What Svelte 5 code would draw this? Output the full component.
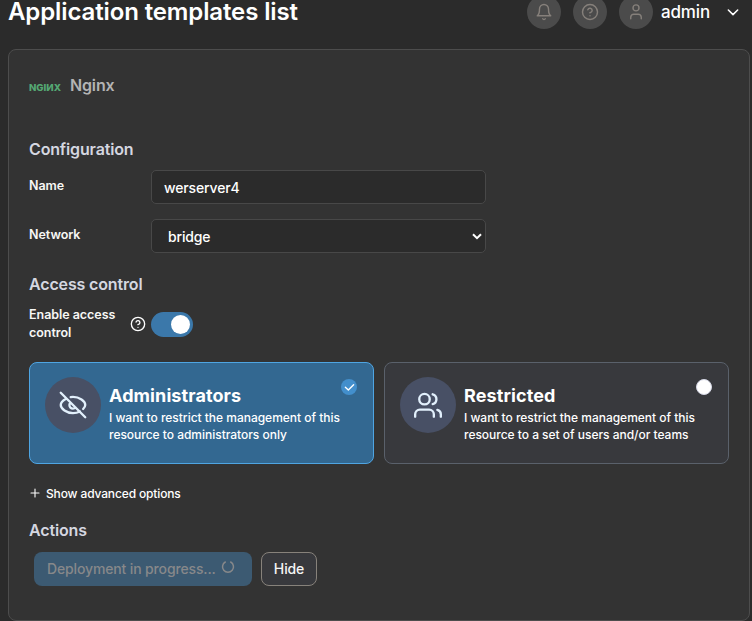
<script>
  const cards = [
    {
      title: 'Administrators',
      lines: ['I want to restrict the management of this', 'resource to administrators only'],
      icon: 'eye-off',
      selected: true
    },
    {
      title: 'Restricted',
      lines: ['I want to restrict the management of this', 'resource to a set of users and/or teams'],
      icon: 'users',
      selected: false
    }
  ];
</script>

<div class="page">
  <header>
    <h1>Application templates list</h1>
    <div class="tools">
      <button class="round" aria-label="Notifications">
        <svg width="18" height="18" viewBox="0 0 24 24"><path d="M18 8A6 6 0 0 0 6 8c0 7-3 9-3 9h18s-3-2-3-9" /><path d="M13.73 21a2 2 0 0 1-3.46 0" /></svg>
      </button>
      <button class="round" aria-label="Help">
        <svg width="18" height="18" viewBox="0 0 24 24"><circle cx="12" cy="12" r="10" /><path d="M9.09 9a3 3 0 0 1 5.83 1c0 2-3 3-3 3M12 17h.01" /></svg>
      </button>
      <button class="round" aria-label="Account">
        <svg width="18" height="18" viewBox="0 0 24 24"><path d="M19 21v-2a4 4 0 0 0-4-4H9a4 4 0 0 0-4 4v2" /><circle cx="12" cy="6.500" r="4" /></svg>
      </button>
      <span class="user">admin</span>
      <svg class="chev" width="16" height="16" viewBox="0 0 24 24"><path d="m5 9 7 7 7-7" /></svg>
    </div>
  </header>

  <main>
    <div class="app">
      <svg class="logo" width="32" height="12" viewBox="0 0 32 12"><text x="0" y="9" textLength="32" lengthAdjust="spacingAndGlyphs">NGIИX</text></svg>
      <span>Nginx</span>
    </div>

    <h2 class="config">Configuration</h2>
    <div class="row name">
      <span class="label">Name</span>
      <div class="field">werserver4</div>
    </div>
    <div class="row network">
      <span class="label">Network</span>
      <div class="field select">
        <span>bridge</span>
        <svg width="10" height="7" viewBox="0 0 10 7"><path d="m1 1.200 4 4 4-4" /></svg>
      </div>
    </div>

    <h2 class="access">Access control</h2>
    <div class="row enable">
      <span class="label wrap">Enable access<br />control</span>
      <svg class="help" width="16" height="16" viewBox="0 0 24 24"><circle cx="12" cy="12" r="10" /><path d="M9.09 9a3 3 0 0 1 5.83 1c0 2-3 3-3 3M12 17h.01" /></svg>
      <span class="switch"><i></i></span>
    </div>

    <div class="cards">
      {#each cards as card}
        <div class="card" class:selected={card.selected}>
          <div class="badge">
            {#if card.icon === 'eye-off'}
              <svg width="28" height="28" viewBox="0 0 24 24"><path d="M10 5.200A11 11 0 0 1 12 5c5.500 0 10.500 3.800 10.500 7 0 1.100-.7 2.300-1.800 3.400M5.700 6.900C3 8.400 1.500 10.300 1.500 12c0 3.200 5 7 10.500 7 2.100 0 4.200-.5 6-1.400M14.120 14.120a3 3 0 1 1-4.240-4.240M1.500 1.500l21 21" /></svg>
            {:else}
              <svg width="28" height="28" viewBox="0 0 24 24"><path d="M17 22v-2a4 4 0 0 0-4-4H5a4 4 0 0 0-4 4v2" /><circle cx="9" cy="7" r="4.500" /><path d="M23 22v-2a4 4 0 0 0-3-3.870M16 2.800a4.350 4.350 0 0 1 0 8.400" /></svg>
            {/if}
          </div>
          <div class="copy">
            <strong>{card.title}</strong>
            <p>{card.lines[0]}<br />{card.lines[1]}</p>
          </div>
          <span class="mark">
            {#if card.selected}
              <svg width="11" height="11" viewBox="0 0 24 24"><path d="M21 6 9.500 17.500 3 11.500" /></svg>
            {/if}
          </span>
        </div>
      {/each}
    </div>

    <div class="advanced">
      <svg width="10" height="10" viewBox="0 0 10 10"><path d="M5 1v8M1 5h8" /></svg>
      <span>Show advanced options</span>
    </div>

    <h2 class="actions">Actions</h2>
    <div class="buttons">
      <button class="deploy" disabled>
        <span>Deployment in progress...</span>
        <svg width="14" height="14" viewBox="0 0 14 14"><path d="M4.300 2A5.500 5.500 0 1 0 9.700 2" /></svg>
      </button>
      <button class="hide">Hide</button>
    </div>
  </main>
</div>

<style>
  :global(body) {
    margin: 0;
    background: #2b2b2b;
  }
  .page {
    box-sizing: border-box;
    width: 752px;
    height: 621px;
    overflow: hidden;
    padding: 0 2px 0 8px;
    background: #2b2b2b;
    color: #fff;
    font-family: Inter, 'Liberation Sans', sans-serif;
  }
  * {
    box-sizing: border-box;
  }
  svg {
    display: block;
    flex: none;
    fill: none;
    stroke: currentColor;
    stroke-width: 2;
    stroke-linecap: round;
    stroke-linejoin: round;
  }
  button {
    padding: 0;
    border: 0;
    font-family: inherit;
  }
  header {
    display: flex;
    justify-content: space-between;
    height: 49px;
  }
  h1 {
    height: 24px;
    margin: 0;
    font-size: 24px;
    font-weight: 600;
    letter-spacing: -0.12px;
    line-height: 24px;
    white-space: nowrap;
  }
  .tools {
    display: flex;
    align-items: center;
    height: 34px;
    margin: -5px 9px 0 0;
  }
  .round {
    display: flex;
    align-items: center;
    justify-content: center;
    width: 34px;
    height: 34px;
    margin-right: 12px;
    border-radius: 50%;
    background: #4b4b4b;
    color: #86807b;
  }
  .round svg {
    stroke-width: 1.9;
  }
  .user {
    width: 64px;
    margin-left: -4px;
    font-size: 17px;
    font-weight: 450;
    letter-spacing: -0.15px;
    line-height: 24px;
  }
  .chev {
    stroke-width: 2.3;
  }
  main {
    height: 572px;
    padding: 0 20px;
    border: 1px solid #4d4d4d;
    border-radius: 8px;
    background: #333;
  }
  .app {
    display: flex;
    align-items: center;
    gap: 9px;
    height: 24px;
    margin-top: 23px;
    color: #b4b4b4;
    font-size: 16px;
    font-weight: 600;
    letter-spacing: -0.15px;
  }
  .logo {
    overflow: visible;
    margin-top: 5px;
  }
  .logo text {
    fill: #55a873;
    stroke: none;
    font-size: 9px;
    font-weight: 800;
    letter-spacing: 0;
  }
  h2 {
    margin: 0;
    color: #d5d7e0;
    font-size: 16px;
    font-weight: 600;
    letter-spacing: -0.15px;
    line-height: 20px;
  }
  .config {
    margin-top: 42px;
  }
  .row {
    display: flex;
  }
  .label {
    width: 122px;
    padding-top: 7px;
    font-size: 12.5px;
    font-weight: 600;
    letter-spacing: -0.04px;
    line-height: 18px;
    color: #f7f7f5;
  }
  .name {
    margin-top: 11px;
  }
  .network {
    margin-top: 15px;
  }
  .field {
    display: flex;
    align-items: center;
    width: 335px;
    height: 34px;
    padding: 1px 12px 0;
    border: 1px solid #484848;
    border-radius: 5px;
    background: #2b2b2b;
    font-size: 14px;
    font-weight: 500;
    letter-spacing: -0.15px;
    line-height: 20px;
  }
  .select {
    justify-content: space-between;
    padding: 1px 3px 0 16px;
  }
  .select svg {
    stroke-linecap: butt;
    stroke-linejoin: miter;
  }
  .access {
    margin-top: 21px;
  }
  .enable {
    align-items: center;
    height: 36px;
    margin-top: 12px;
  }
  .wrap {
    width: 101px;
    margin-top: -1px;
    padding: 0;
  }
  .help {
    margin-right: 5px;
  }
  .switch {
    display: flex;
    align-items: center;
    justify-content: flex-end;
    width: 42px;
    height: 25px;
    padding-right: 3px;
    border-radius: 13px;
    background: #3b78aa;
  }
  .switch i {
    width: 19px;
    height: 19px;
    border-radius: 50%;
    background: #fff;
  }
  .cards {
    display: flex;
    gap: 10px;
    margin-top: 20px;
  }
  .card {
    display: flex;
    width: 345px;
    height: 102px;
    padding: 14px 16px 0 15px;
    border: 1px solid #5a616b;
    border-radius: 8px;
    background: #38393d;
  }
  .card.selected {
    border-color: #4fa5e2;
    background: #336891;
  }
  .badge {
    display: flex;
    align-items: center;
    justify-content: center;
    flex: none;
    width: 56px;
    height: 56px;
    border-radius: 50%;
    background: #485065;
    color: #e2f0fc;
  }
  .copy {
    flex: 1;
    padding: 8px 0 0 8px;
    white-space: nowrap;
  }
  .copy strong {
    display: block;
    font-size: 18px;
    font-weight: 700;
    letter-spacing: 0.1px;
    line-height: 22px;
  }
  .copy p {
    margin: 2px 0 0;
    font-size: 12px;
    font-weight: 500;
    letter-spacing: -0.02px;
    line-height: 17px;
  }
  .mark {
    display: flex;
    align-items: center;
    justify-content: center;
    flex: none;
    width: 16px;
    height: 16px;
    margin-top: 2px;
    border: 1px solid #d5d7e5;
    border-radius: 50%;
    background: #fff;
  }
  .mark svg {
    stroke-width: 3;
  }
  .selected .mark {
    border: 0;
    background: #438fcc;
  }
  .advanced {
    display: flex;
    align-items: center;
    gap: 6px;
    height: 18px;
    margin: 20px 0 0 1px;
    font-size: 12px;
    font-weight: 500;
    letter-spacing: -0.14px;
  }
  .advanced svg {
    stroke-width: 1.1;
  }
  .actions {
    margin-top: 18px;
  }
  .buttons {
    display: flex;
    gap: 9px;
    margin: 12px 0 0 5px;
  }
  .buttons button {
    height: 34px;
    border-radius: 8px;
    font-size: 14px;
    font-weight: 500;
    letter-spacing: -0.14px;
    line-height: 20px;
  }
  .deploy {
    display: flex;
    align-items: center;
    gap: 5px;
    width: 218px;
    padding-left: 13px;
    background: #3c5a72;
    color: #87888a;
    white-space: nowrap;
  }
  .deploy svg {
    margin-top: -4px;
    stroke-width: 1.5;
  }
  .buttons .hide {
    width: 56px;
    border: 1px solid #87827b;
    background: #38393d;
    color: #f5f5f5;
  }
</style>
